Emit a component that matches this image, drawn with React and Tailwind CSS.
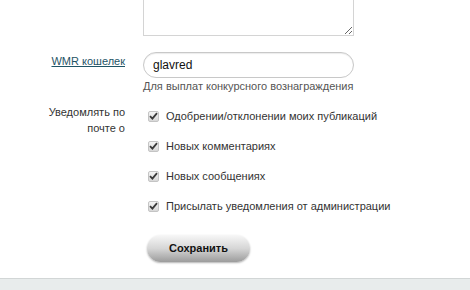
const FONT = { fontFamily: '"Liberation Sans", Arial, sans-serif' };

const OPTIONS = [
  'Одобрении/отклонении моих публикаций',
  'Новых комментариях',
  'Новых сообщениях',
  'Присылать уведомления от администрации',
];

function Check({ label }) {
  return (
    <label className="flex items-center h-[30px] text-[11px] text-[#333] whitespace-nowrap">
      <span className="w-[11px] h-[11px] ml-[5px] mr-[7px] border border-[#c4c4c4] rounded-[2px] bg-gradient-to-b from-[#f4f4f4] to-[#d8d8d8] flex items-center justify-center">
        <svg width="9" height="8" viewBox="0 0 9 8">
          <path d="M1 4.2 L3.4 6.6 L8 1.2" fill="none" stroke="#3a3a3a" strokeWidth="1.8" />
        </svg>
      </span>
      {label}
    </label>
  );
}

export default function App() {
  return (
    <div className="w-[470px] h-[290px] bg-white overflow-hidden flex flex-col" style={FONT}>
      <div className="flex-1 grid grid-cols-[125px_211px] gap-x-[18px] content-start">
        {/* ── Textarea (cut off above) ───────────────────────── */}
        <div />
        <textarea className="block w-[211px] h-[36px] border border-t-0 border-[#d4d4d4] outline-none" />

        {/* ── WMR wallet ─────────────────────────────────────── */}
        <a href="#" className="mt-[18px] text-right text-[11px] text-[#1f5466] underline leading-[14px] whitespace-nowrap">
          WMR кошелек
        </a>
        <div className="mt-[16px]">
          <input
            defaultValue="glavred"
            className="block w-[211px] h-[26px] border border-[#c8c8c8] rounded-[13px] px-[9px] text-[12px] text-[#111] outline-none shadow-[inset_0_1px_1px_rgba(0,0,0,0.08)]"
            style={FONT}
          />
          <p className="text-[11px] text-[#555] mt-[1px] leading-[14px] whitespace-nowrap">
            Для выплат конкурсного вознаграждения
          </p>
        </div>

        {/* ── Notifications ──────────────────────────────────── */}
        <p className="mt-[11px] text-right text-[11px] text-[#333] leading-[16px]">
          Уведомлять по
          <br />
          почте о
        </p>
        <div className="mt-[8px] w-[260px]">
          {OPTIONS.map((o) => (
            <Check key={o} label={o} />
          ))}
          <button className="mt-[14px] ml-[4px] w-[103px] h-[27px] rounded-full bg-gradient-to-b from-[#f7f7f7] via-[#d6d6d6] to-[#9c9c9c] shadow-[0_1px_2px_rgba(0,0,0,0.3)] text-[11px] font-bold text-[#111]">
            Сохранить
          </button>
        </div>
      </div>

      {/* ── Footer strip ─────────────────────────────────────── */}
      <div className="h-[12px] border-t border-[#d2d6d6] bg-[#e8ecec]" />
    </div>
  );
}
